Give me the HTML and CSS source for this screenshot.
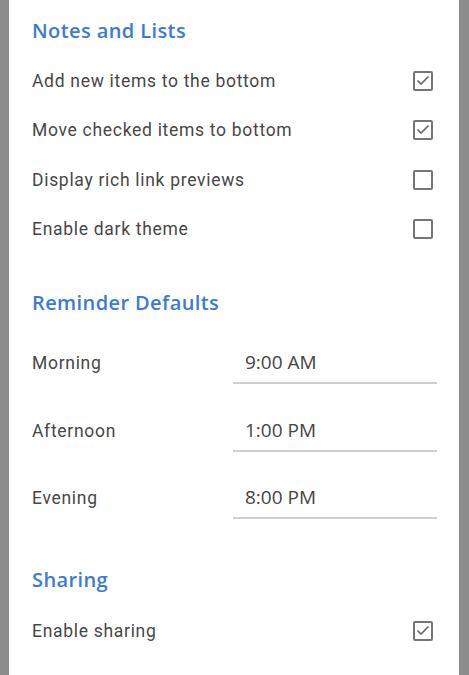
FILE: index.html
```html
<!DOCTYPE html>
<html>
  <head>
    <title>Settings</title>
    <link rel="stylesheet" href="styles.css">
  </head>
  <body>
    <div class="panel">
      <section class="group">
        <h2 class="group-title">Notes and Lists</h2>
        <div class="row">
          <span class="label">Add new items to the bottom</span>
          <span class="box checked"><svg viewBox="0 0 20 20"><polyline points="4.5,9.5 8,13 15.5,5.5"/></svg></span>
        </div>
        <div class="row">
          <span class="label">Move checked items to bottom</span>
          <span class="box checked"><svg viewBox="0 0 20 20"><polyline points="4.5,9.5 8,13 15.5,5.5"/></svg></span>
        </div>
        <div class="row">
          <span class="label">Display rich link previews</span>
          <span class="box"></span>
        </div>
        <div class="row">
          <span class="label">Enable dark theme</span>
          <span class="box"></span>
        </div>
      </section>

      <section class="group">
        <h2 class="group-title">Reminder Defaults</h2>
        <div class="time-row">
          <span class="label">Morning</span>
          <span class="time">9:00 AM</span>
        </div>
        <div class="time-row">
          <span class="label">Afternoon</span>
          <span class="time">1:00 PM</span>
        </div>
        <div class="time-row">
          <span class="label">Evening</span>
          <span class="time">8:00 PM</span>
        </div>
      </section>

      <section class="group sharing">
        <h2 class="group-title">Sharing</h2>
        <div class="row">
          <span class="label">Enable sharing</span>
          <span class="box checked"><svg viewBox="0 0 20 20"><polyline points="4.5,9.5 8,13 15.5,5.5"/></svg></span>
        </div>
      </section>
    </div>
  </body>
</html>
```

FILE: styles.css
```css
html, body {
  margin: 0;
  height: 100%;
}
body {
  background-color: #8c8c8c;
  font-family: Roboto, "Noto Sans", sans-serif;
}
.panel {
  box-sizing: border-box;
  min-height: 100%;
  margin: 0 10px 0 9px;
  padding: 6px 22px 0 23px;
  background-color: #fff;
}
.group + .group {
  margin-top: 24px;
}
.group-title {
  margin: 0;
  height: 50px;
  line-height: 50px;
  font-family: "Open Sans", sans-serif;
  font-size: 20px;
  font-weight: 600;
  letter-spacing: 0.4px;
  color: #3b7bd6;
}
.row {
  display: flex;
  align-items: center;
  justify-content: space-between;
  height: 49.5px;
  padding-right: 4px;
}
.sharing .row {
  margin-top: 2px;
}
.label {
  font-size: 17.5px;
  color: #474747;
  letter-spacing: 0.7px;
}
.box {
  box-sizing: border-box;
  width: 20px;
  height: 20px;
  border: 2px solid #757575;
  border-radius: 2px;
  position: relative;
}
.box svg {
  position: absolute;
  left: -2px;
  top: -2px;
  width: 20px;
  height: 20px;
  fill: none;
  stroke: #6a6a6a;
  stroke-width: 1.7;
}
.time-row {
  display: flex;
  align-items: center;
  justify-content: space-between;
  padding: 14px 0 11.5px;
}
.time {
  box-sizing: border-box;
  width: 204px;
  height: 42px;
  line-height: 40px;
  padding-left: 12px;
  font-family: "Open Sans", sans-serif;
  font-size: 19px;
  color: #444;
  border-bottom: 2px solid #cfcfcf;
}
```
